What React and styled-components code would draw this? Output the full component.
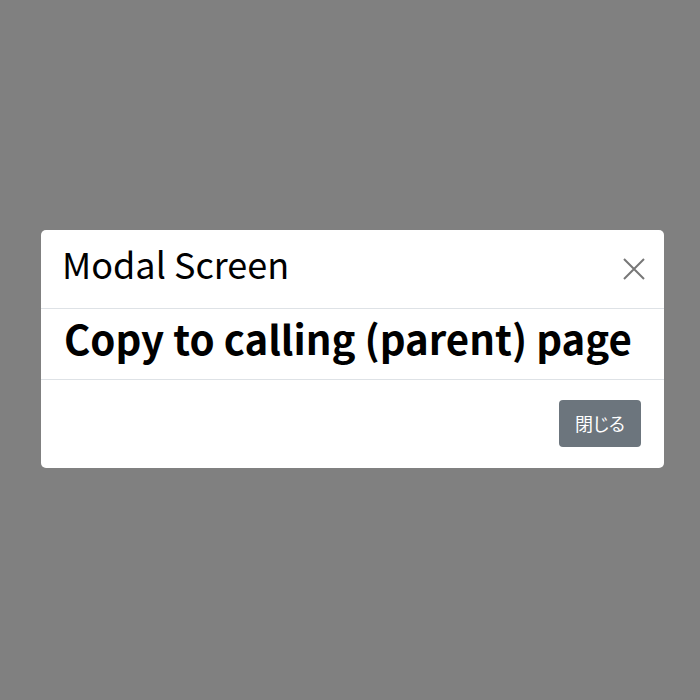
import styled, { createGlobalStyle } from "styled-components";

const Global = createGlobalStyle`
  html, body {
    margin: 0;
    padding: 0;
  }
  body {
    background: #808080;
    font-family: "Noto Sans CJK JP", "Noto Sans", sans-serif;
  }
`;

const Backdrop = styled.div`
  width: 700px;
  height: 700px;
  box-sizing: border-box;
  padding: 230px 0 0 41px;
  background: #808080;
`;

const Dialog = styled.div`
  width: 623px;
  background: #fff;
  border-radius: 5px;
  overflow: hidden;
`;

const Header = styled.div`
  height: 79px;
  box-sizing: border-box;
  display: flex;
  align-items: center;
  justify-content: space-between;
  padding: 0 15px 0 21px;
  border-bottom: 1px solid #dee2e6;
`;

const Title = styled.h5`
  margin: 0 0 12px;
  font-size: 36px;
  font-weight: 400;
  color: #000;
  line-height: 1;
`;

const CloseButton = styled.button`
  width: 30px;
  height: 30px;
  padding: 0;
  border: 0;
  background: transparent;
  display: flex;
  align-items: center;
  justify-content: center;
  cursor: pointer;
`;

const Body = styled.div`
  height: 71px;
  box-sizing: border-box;
  display: flex;
  align-items: center;
  padding: 0 22px 0 23px;
  border-bottom: 1px solid #dee2e6;
`;

const Message = styled.h3`
  margin: 0 0 11px;
  font-size: 40.2px;
  font-weight: 700;
  color: #000;
  line-height: 1;
  white-space: nowrap;
`;

const Footer = styled.div`
  height: 88px;
  box-sizing: border-box;
  display: flex;
  justify-content: flex-end;
  align-items: flex-start;
  padding: 20px 23px 0 0;
`;

const Button = styled.button`
  width: 82px;
  height: 47px;
  padding: 0 0 2px;
  border: 0;
  border-radius: 4px;
  background: #6c757d;
  color: #fff;
  font-family: "Noto Sans CJK JP", sans-serif;
  font-size: 18px;
  font-feature-settings: "palt";
  cursor: pointer;
`;

export default function App() {
  return (
    <>
      <Global />
      <Backdrop>
        <Dialog>
          <Header>
            <Title>Modal Screen</Title>
            <CloseButton aria-label="close">
              <svg width="22" height="22" viewBox="0 0 22 22">
                <path d="M1 1 L21 21 M21 1 L1 21" stroke="#777" strokeWidth="2" />
              </svg>
            </CloseButton>
          </Header>
          <Body>
            <Message>Copy to calling (parent) page</Message>
          </Body>
          <Footer>
            <Button>閉じる</Button>
          </Footer>
        </Dialog>
      </Backdrop>
    </>
  );
}
